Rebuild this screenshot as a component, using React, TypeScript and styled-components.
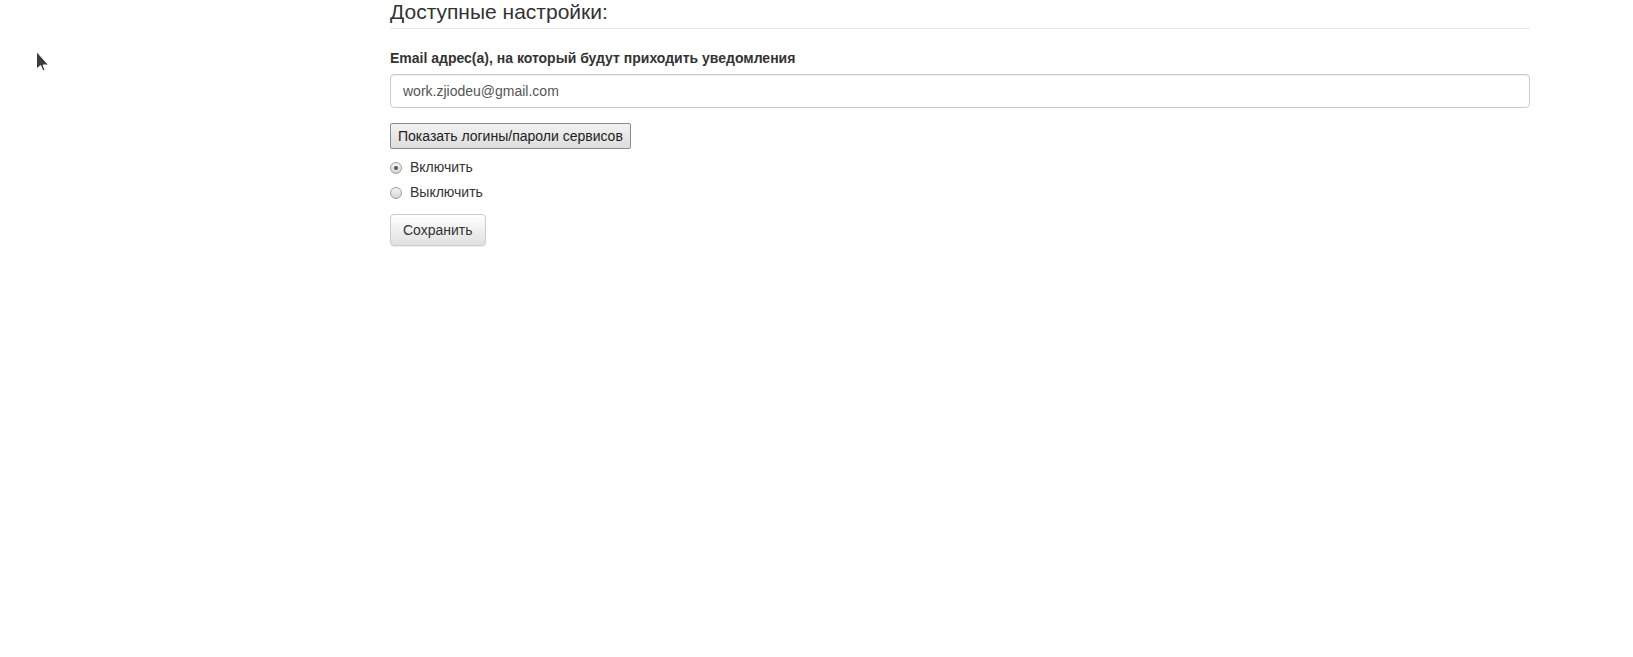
import React from "react";
import styled, { createGlobalStyle } from "styled-components";

const Global = createGlobalStyle`
  html, body { margin: 0; padding: 0; background: #fff; }
  body {
    font-family: "Liberation Sans", Arial, Helvetica, sans-serif;
    font-size: 14px;
    line-height: 20px;
    color: #333;
  }
`;

const Page = styled.div`
  position: relative;
  min-height: 657px;
`;

const Cursor = styled.svg`
  position: absolute;
  left: 35px;
  top: 50px;
`;

const Container = styled.form`
  margin-left: 390px;
  width: 1140px;
  display: flex;
  flex-direction: column;
  align-items: flex-start;
`;

const Legend = styled.div`
  width: 100%;
  box-sizing: content-box;
  font-size: 21px;
  line-height: 30px;
  height: 30px;
  margin-top: -3px;
  padding-bottom: 1px;
  color: #333;
  border-bottom: 1px solid #e5e5e5;
  margin-bottom: 19px;
`;

const Label = styled.label`
  font-weight: bold;
  font-size: 14px;
  line-height: 20px;
  margin-bottom: 6px;
`;

const Input = styled.input`
  box-sizing: border-box;
  width: 100%;
  height: 34px;
  padding: 6px 12px;
  font-family: inherit;
  font-size: 14px;
  color: #555;
  border: 1px solid #ccc;
  border-radius: 4px;
  box-shadow: inset 0 1px 1px rgba(0, 0, 0, 0.075);
  outline: none;
  margin-bottom: 15px;
`;

const NativeButton = styled.button`
  box-sizing: border-box;
  height: 26px;
  padding: 0 7px;
  font-family: inherit;
  font-size: 14px;
  color: #222;
  background: linear-gradient(#f2f2f2, #dddddd);
  border: 1px solid #8c8c8c;
  border-radius: 2px;
  margin-bottom: 5px;
`;

const RadioRow = styled.label`
  display: flex;
  align-items: center;
  gap: 8px;
  height: 25px;
  font-size: 14px;
`;

const Radio = styled.input.attrs({ type: "radio" })`
  appearance: none;
  margin: 3px 0 0 0;
  width: 12px;
  height: 12px;
  border-radius: 50%;
  border: 1px solid #9e9e9e;
  background: linear-gradient(#f4f4f4, #d6d6d6);
  box-sizing: border-box;
  display: grid;
  place-items: center;
  &:checked::after {
    content: "";
    width: 4px;
    height: 4px;
    border-radius: 50%;
    background: #555;
  }
`;

const SaveButton = styled.button`
  box-sizing: border-box;
  margin-top: 10px;
  height: 32px;
  padding: 0 12px;
  font-family: inherit;
  font-size: 14px;
  color: #333;
  background: linear-gradient(#ffffff, #e0e0e0);
  border: 1px solid #ccc;
  border-radius: 4px;
  box-shadow: inset 0 1px 0 rgba(255, 255, 255, 0.15), 0 1px 1px rgba(0, 0, 0, 0.075);
`;

export default function App() {
  return (
    <Page>
      <Global />
      <Cursor width="16" height="24" viewBox="0 0 16 24">
        <polygon
          points="1.5,1.5 1.5,19 5.5,15.5 8,21 10,20 8,15 13.5,15"
          fill="#3c3c3c"
          stroke="#ffffff"
          strokeWidth="1"
          strokeLinejoin="round"
        />
      </Cursor>
      <Container onSubmit={(e) => e.preventDefault()}>
        <Legend>Доступные настройки:</Legend>
        <Label htmlFor="email">Email адрес(а), на который будут приходить уведомления</Label>
        <Input id="email" type="text" defaultValue="work.zjiodeu@gmail.com" />
        <NativeButton type="button">Показать логины/пароли сервисов</NativeButton>
        <RadioRow>
          <Radio name="state" defaultChecked />
          Включить
        </RadioRow>
        <RadioRow>
          <Radio name="state" />
          Выключить
        </RadioRow>
        <SaveButton type="submit">Сохранить</SaveButton>
      </Container>
    </Page>
  );
}
